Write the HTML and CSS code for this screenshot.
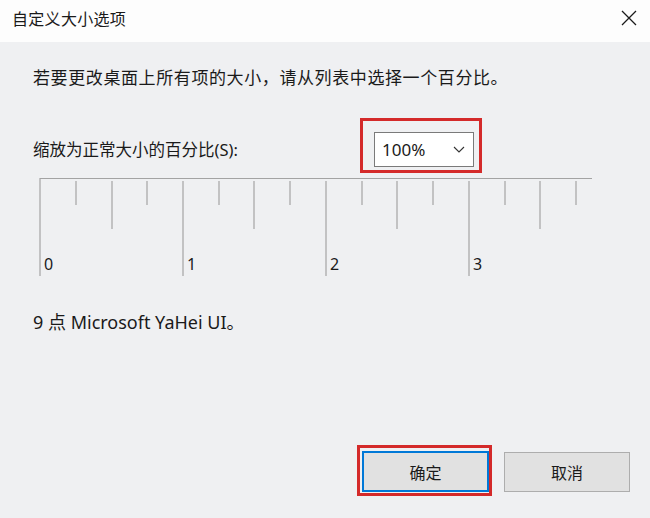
FILE: index.html
```html
<!DOCTYPE html>
<html lang="zh-CN">
<head>
  <meta charset="UTF-8">
  <title>自定义大小选项</title>
  <link rel="stylesheet" href="styles.css">
</head>
<body>
  <div class="window">
    <div class="titlebar">
      <span class="title">自定义大小选项</span>
      <svg class="close" width="16" height="16" viewBox="0 0 16 16">
        <path d="M1 1 L15 15 M15 1 L1 15" stroke="#1a1a1a" stroke-width="1.3" fill="none"/>
      </svg>
    </div>
    <div class="content">
      <p class="intro">若要更改桌面上所有项的大小，请从列表中选择一个百分比。</p>
      <div class="scale-row">
        <span class="label">缩放为正常大小的百分比(S):</span>
        <div class="highlight highlight-select">
          <div class="select">
            <span>100%</span>
            <svg width="12" height="7" viewBox="0 0 12 7">
              <polyline points="1,1 6,6 11,1" stroke="#333" stroke-width="1.1" fill="none"/>
            </svg>
          </div>
        </div>
      </div>
      <svg class="ruler" width="560" height="100" viewBox="0 0 560 100">
        <g stroke="#a3a3a3" stroke-width="1.2">
          <line x1="2" y1="0.5" x2="554" y2="0.5"/>
          <line x1="2" y1="0" x2="2" y2="98"/>
          <line x1="145" y1="3" x2="145" y2="98"/>
          <line x1="288" y1="3" x2="288" y2="98"/>
          <line x1="431" y1="3" x2="431" y2="98"/>
          <line x1="74" y1="3" x2="74" y2="51"/>
          <line x1="216" y1="3" x2="216" y2="51"/>
          <line x1="359" y1="3" x2="359" y2="51"/>
          <line x1="502" y1="3" x2="502" y2="51"/>
          <line x1="38" y1="3" x2="38" y2="27"/>
          <line x1="109" y1="3" x2="109" y2="27"/>
          <line x1="181" y1="3" x2="181" y2="27"/>
          <line x1="252" y1="3" x2="252" y2="27"/>
          <line x1="324" y1="3" x2="324" y2="27"/>
          <line x1="395" y1="3" x2="395" y2="27"/>
          <line x1="467" y1="3" x2="467" y2="27"/>
          <line x1="538" y1="3" x2="538" y2="27"/>
        </g>
        <g class="ruler-num">
          <text x="6" y="92">0</text>
          <text x="149" y="92">1</text>
          <text x="292" y="92">2</text>
          <text x="435" y="92">3</text>
        </g>
      </svg>
      <p class="font-info">9 点 Microsoft YaHei UI。</p>
    </div>
    <div class="footer">
      <div class="highlight highlight-ok">
        <button class="btn btn-default">确定</button>
      </div>
      <button class="btn">取消</button>
    </div>
  </div>
</body>
</html>
```

FILE: styles.css
```css
body {
  margin: 0;
  font-family: "Noto Sans", "Noto Sans CJK SC", sans-serif;
  color: #1a1a1a;
}
.window {
  width: 650px;
  height: 518px;
  background: #eff0f2;
  display: flex;
  flex-direction: column;
}
.titlebar {
  height: 42px;
  background: #fdfdfd;
  display: flex;
  align-items: center;
  justify-content: space-between;
  padding: 0 13px 6px 12px;
  box-sizing: border-box;
}
.title {
  font-family: "Noto Sans CJK SC", sans-serif;
  font-size: 16px;
  letter-spacing: 0.3px;
}
.content {
  padding: 0 33px;
}
.intro {
  margin: 23px 0 0;
  font-family: "Noto Sans CJK SC", sans-serif;
  font-size: 17px;
  line-height: 24px;
  letter-spacing: 0.6px;
}
.scale-row {
  display: flex;
  align-items: center;
  margin-top: 29px;
}
.label {
  width: 327px;
  font-size: 16.5px;
  line-height: 24px;
  padding-top: 9px;
}
.highlight {
  border: 3px solid #d42a2a;
}
.highlight-select {
  padding: 11px 5px 3px 11px;
}
.select {
  width: 100px;
  height: 35px;
  box-sizing: border-box;
  border: 1px solid #7a7a7a;
  background: #fff;
  display: flex;
  align-items: center;
  justify-content: space-between;
  padding: 0 8px 0 7px;
  font-size: 17px;
}
.ruler {
  display: block;
  margin: 5px 0 0 5px;
}
.ruler-num {
  font-family: "Noto Sans", sans-serif;
  font-size: 16px;
  fill: #1a1a1a;
}
.font-info {
  margin: 32px 0 0;
  font-size: 18px;
  line-height: 24px;
}
.footer {
  margin-top: auto;
  display: flex;
  align-items: center;
  justify-content: flex-end;
  gap: 12px;
  padding: 0 20px 22px 0;
}
.highlight-ok {
  padding: 3px 0 1px 2px;
}
.btn {
  width: 126px;
  height: 40px;
  background: #e1e1e1;
  border: 1px solid #adadad;
  font-family: "Noto Sans CJK SC", sans-serif;
  font-size: 16px;
  color: #1a1a1a;
  margin-top: 3px;
}
.btn-default {
  display: block;
  width: 127px;
  height: 41px;
  border: 2px solid #0078d7;
  margin-top: 0;
}
```
